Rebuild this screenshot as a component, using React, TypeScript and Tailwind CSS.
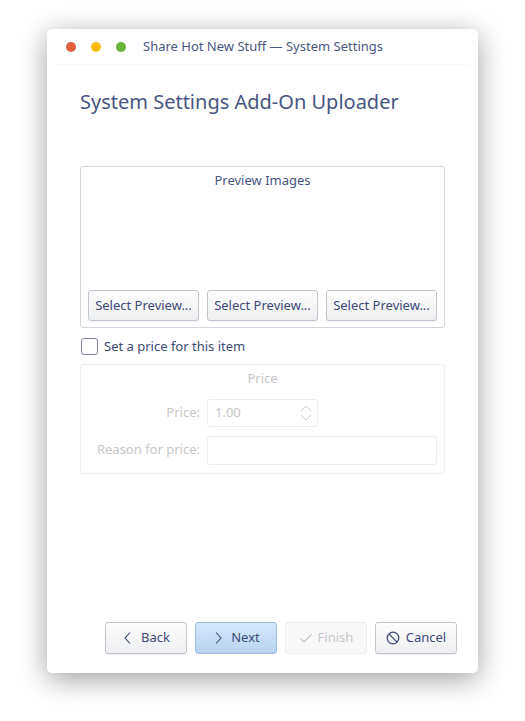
import React from "react";

const font = { fontFamily: '"Noto Sans", "Open Sans", sans-serif' };

function Btn({ children, w = "w-[111px]", h = "h-[31px]" }: { children: React.ReactNode; w?: string; h?: string }) {
  return (
    <div className={`${w} ${h} flex items-center justify-center rounded-[3px] border border-[#c2c5cf] bg-gradient-to-b from-[#fcfcfc] to-[#eff0f1] text-[13px] text-[#3d4a78] shadow-[0_1px_1px_rgba(0,0,0,0.06)]`}>
      {children}
    </div>
  );
}

export default function App() {
  return (
    <div style={font} className="w-[525px] h-[721px] bg-white pl-[47px] pt-[29px]">
      <div className="w-[431px] h-[644px] bg-white rounded-[5px] shadow-[0_6px_28px_rgba(0,0,0,0.38)] flex flex-col">
        {/* title bar */}
        <div className="h-[35px] flex items-center pl-[19px] shrink-0">
          <div className="w-[10px] h-[10px] rounded-full bg-[#e0613f]" />
          <div className="w-[10px] h-[10px] rounded-full bg-[#fbbb0e] ml-[15px]" />
          <div className="w-[10px] h-[10px] rounded-full bg-[#6bb43b] ml-[15px]" />
          <div className="ml-[17px] text-[13px] text-[#4a5680]">Share Hot New Stuff — System Settings</div>
        </div>
        <div className="mx-[10px] h-px bg-[#f7f7f8]" />
        <div className="flex-1 flex flex-col px-[33px]">
          <div className="mt-[23px] text-[20px] leading-[28px] text-[#475583]">System Settings Add-On Uploader</div>
          {/* preview group */}
          <div className="mt-[50px] h-[162px] rounded-[3px] border border-[#d3d6dd] flex flex-col px-[7px] pb-[6px]">
            <div className="text-center text-[13px] text-[#475583] mt-[5px] leading-[16px]">Preview Images</div>
            <div className="flex-1" />
            <div className="flex gap-[8px]">
              <Btn>Select Preview...</Btn>
              <Btn>Select Preview...</Btn>
              <Btn>Select Preview...</Btn>
            </div>
          </div>
          {/* checkbox */}
          <div className="mt-[9px] flex items-center">
            <div className="w-[17px] h-[17px] rounded-[3px] border border-[#7c8299] bg-white ml-[1px]" />
            <div className="ml-[6px] text-[13px] text-[#3d4a78]">Set a price for this item</div>
          </div>
          {/* price group */}
          <div className="mt-[7px] h-[110px] rounded-[3px] border border-[#efefef] flex flex-col px-[7px]">
            <div className="text-center text-[13px] text-[#c6c6c6] mt-[5px] leading-[16px]">Price</div>
            <div className="mt-[13px] flex items-center">
              <div className="w-[112px] text-right text-[13px] text-[#c6c6c6]">Price:</div>
              <div className="ml-[7px] w-[111px] h-[28px] rounded-[3px] border border-[#ededed] flex items-center justify-between pl-[7px] pr-[4px]">
                <span className="text-[13px] text-[#c6c6c6]">1.00</span>
                <svg width="14" height="22" viewBox="0 0 14 22" fill="none" stroke="#d0d0d0" strokeWidth="1">
                  <path d="M2 9 L7 4 L12 9" />
                  <path d="M2 13 L7 18 L12 13" />
                </svg>
              </div>
            </div>
            <div className="mt-[9px] flex items-center">
              <div className="w-[112px] text-right text-[13px] text-[#c6c6c6]">Reason for price:</div>
              <div className="ml-[7px] w-[230px] h-[29px] rounded-[3px] border border-[#ededed]" />
            </div>
          </div>
          <div className="flex-1" />
          {/* bottom buttons */}
          <div className="flex justify-end gap-[8px] mb-[19px] -mr-[12px]">
            <Btn w="w-[82px]" h="h-[32px]">
              <svg width="12" height="14" viewBox="0 0 12 14" fill="none" stroke="#3d4a78" strokeWidth="1.1" className="mr-[7px]">
                <path d="M8 1.5 L3 7 L8 12.5" />
              </svg>
              Back
            </Btn>
            <div className="w-[82px] h-[32px] flex items-center justify-center rounded-[3px] border border-[#9cbce3] bg-gradient-to-b from-[#d6e8fc] to-[#b9d3f1] text-[13px] text-[#3d4a78]">
              <svg width="12" height="14" viewBox="0 0 12 14" fill="none" stroke="#3d4a78" strokeWidth="1.1" className="mr-[7px]">
                <path d="M4 1.5 L9 7 L4 12.5" />
              </svg>
              Next
            </div>
            <div className="w-[82px] h-[32px] flex items-center justify-center rounded-[3px] border border-[#ececec] bg-[#f8f8f8] text-[13px] text-[#c8c8c8]">
              <svg width="14" height="14" viewBox="0 0 14 14" fill="none" stroke="#c4c4c4" strokeWidth="1.1" className="mr-[5px]">
                <path d="M1.5 7.5 L5 11 L12.5 3.5" />
              </svg>
              Finish
            </div>
            <Btn w="w-[82px]" h="h-[32px]">
              <svg width="14" height="14" viewBox="0 0 14 14" fill="none" stroke="#3d4a78" strokeWidth="1.3" className="mr-[6px]">
                <circle cx="7" cy="7" r="5.8" />
                <path d="M2.9 2.9 L11.1 11.1" />
              </svg>
              Cancel
            </Btn>
          </div>
        </div>
      </div>
    </div>
  );
}
